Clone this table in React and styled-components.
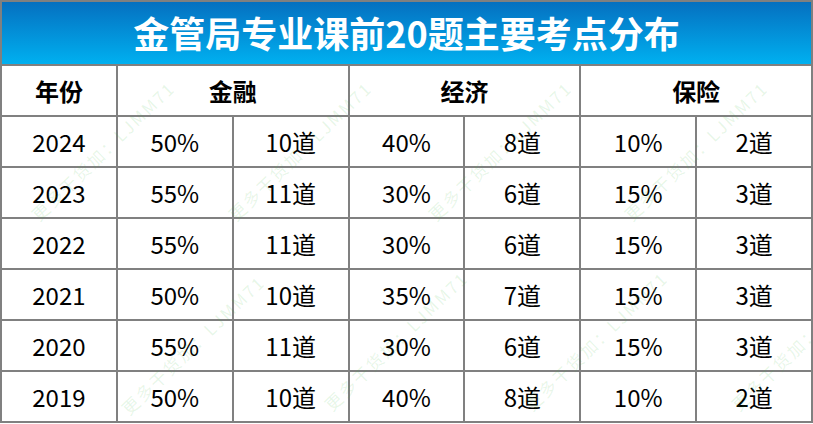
import React from "react";
import styled, { createGlobalStyle } from "styled-components";

const GlobalStyle = createGlobalStyle`
  html, body {
    margin: 0;
    padding: 0;
    background: #ffffff;
  }
  body {
    font-family: "Noto Sans CJK SC", "Noto Sans", sans-serif;
  }
`;

const Table = styled.div`
  position: relative;
  width: 813px;
  box-sizing: border-box;
  display: grid;
  grid-template-columns: repeat(7, 1fr);
  grid-template-rows: 62px;
  grid-auto-rows: 49px;
  gap: 2px;
  padding: 2px;
  background: #808080;
`;

const Title = styled.div`
  grid-column: 1 / -1;
  display: flex;
  align-items: center;
  justify-content: center;
  background: linear-gradient(to bottom, #0570c0, #00b0f0);
  color: #ffffff;
  font-size: 36px;
  font-weight: 700;
  padding-bottom: 2px;
`;

const Cell = styled.div`
  grid-column: span ${(p) => p.$span || 1};
  display: flex;
  align-items: center;
  justify-content: center;
  background: #ffffff;
  color: #000000;
  font-size: 24px;
  font-weight: ${(p) => (p.$head ? 700 : 400)};
  line-height: 1;
`;

const WatermarkLayer = styled.div`
  position: absolute;
  inset: 0;
  overflow: hidden;
  pointer-events: none;
`;

const Watermark = styled.span`
  position: absolute;
  white-space: nowrap;
  font-size: 17px;
  line-height: 17px;
  letter-spacing: 2px;
  color: rgba(70, 190, 70, 0.13);
  transform-origin: 0 100%;
  transform: rotate(-44deg);
`;

const rows = [
  ["2024", "50%", "10道", "40%", "8道", "10%", "2道"],
  ["2023", "55%", "11道", "30%", "6道", "15%", "3道"],
  ["2022", "55%", "11道", "30%", "6道", "15%", "3道"],
  ["2021", "50%", "10道", "35%", "7道", "15%", "3道"],
  ["2020", "55%", "11道", "30%", "6道", "15%", "3道"],
  ["2019", "50%", "10道", "40%", "8道", "10%", "2道"],
];

// start points (bottom-left of the text) of the faint watermark
const marks = [
  [40, 223], [237, 223], [437, 223], [633, 223],
  [130, 417], [333, 413], [533, 413], [740, 413],
];

export default function App() {
  return (
    <>
      <GlobalStyle />
      <Table>
        <Title>金管局专业课前20题主要考点分布</Title>
        <Cell $head>年份</Cell>
        <Cell $head $span={2}>金融</Cell>
        <Cell $head $span={2}>经济</Cell>
        <Cell $head $span={2}>保险</Cell>
        {rows.map((row) =>
          row.map((v, i) => <Cell key={row[0] + "-" + i}>{v}</Cell>)
        )}
        <WatermarkLayer>
          {marks.map(([x, y]) => (
            <Watermark key={x + "-" + y} style={{ left: x, top: y - 17 }}>
              更多干货加：LJMM71
            </Watermark>
          ))}
        </WatermarkLayer>
      </Table>
    </>
  );
}
